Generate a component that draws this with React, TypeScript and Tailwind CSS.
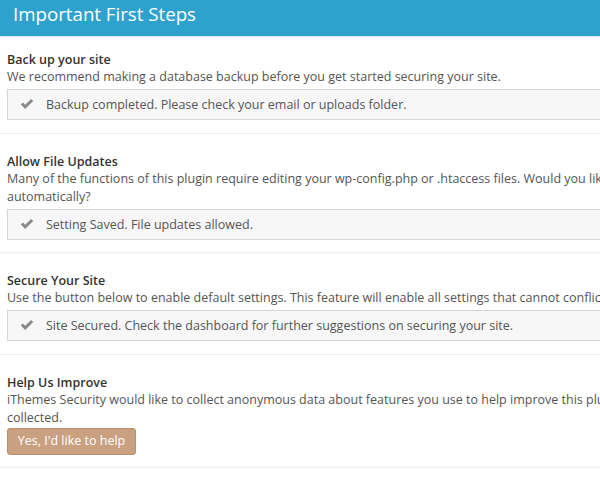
import React from "react";

const Check = () => (
  <svg width="14" height="11" viewBox="0 0 14 11" className="shrink-0">
    <path d="M0.8 5.6 L2.9 3.5 L5.2 5.8 L11.1 0 L13.2 2.1 L5.2 10 Z" fill="#8a8a8a" />
  </svg>
);

const Status = ({ text }: { text: string }) => (
  <div className="mt-[3px] flex h-[31px] items-center border border-[#d6d6d6] bg-[#f7f7f7] pl-[12px]">
    <Check />
    <span className="ml-[12px] text-[12.5px] leading-[29px] text-[#555]">{text}</span>
  </div>
);

const Section = ({
  title,
  lines,
  children,
  first,
  tight,
}: {
  title: string;
  lines: string[];
  children: React.ReactNode;
  first?: boolean;
  tight?: boolean;
}) => (
  <div
    className={`${first ? "pt-[15px]" : "pt-[20px]"} ${tight ? "pb-[12px]" : "pb-[13px]"} border-b border-[#ececec] pl-[7px]`}
  >
    <div className="text-[12.5px] font-semibold leading-[16px] text-[#333]">{title}</div>
    <div className="whitespace-nowrap text-[12.5px] leading-[18px] text-[#555]">
      {lines.map((l, i) => (
        <div key={i}>{l}</div>
      ))}
    </div>
    {children}
  </div>
);

export default function App() {
  return (
    <div
      className="h-[481px] w-full overflow-hidden bg-white"
      style={{ fontFamily: '"Open Sans", "Noto Sans", sans-serif' }}
    >
      <div className="w-[900px]">
        <div className="h-[37px] border-b border-[#d8e8f0] bg-[#2ea2cc] pl-[13px]">
          <h1 className="text-[18.7px] leading-[28px] text-white">Important First Steps</h1>
        </div>
        <Section
          first
          title="Back up your site"
          lines={["We recommend making a database backup before you get started securing your site."]}
        >
          <Status text="Backup completed. Please check your email or uploads folder." />
        </Section>
        <Section
          tight
          title="Allow File Updates"
          lines={[
            "Many of the functions of this plugin require editing your wp-config.php or .htaccess files. Would you like iThemes Security to make these changes for you",
            "automatically?",
          ]}
        >
          <Status text="Setting Saved. File updates allowed." />
        </Section>
        <Section
          title="Secure Your Site"
          lines={[
            "Use the button below to enable default settings. This feature will enable all settings that cannot conflict with other plugins or themes.",
          ]}
        >
          <Status text="Site Secured. Check the dashboard for further suggestions on securing your site." />
        </Section>
        <Section
          title="Help Us Improve"
          lines={[
            "iThemes Security would like to collect anonymous data about features you use to help improve this plugin. Absolutely no information that can identify you will be",
            "collected.",
          ]}
        >
          <button className="mt-[1px] mb-[-1px] h-[27px] w-[129px] rounded-[3px] border border-[#b8926f] bg-[#c9a080] text-[12.5px] font-medium text-white">
            Yes, I'd like to help
          </button>
        </Section>
      </div>
    </div>
  );
}
